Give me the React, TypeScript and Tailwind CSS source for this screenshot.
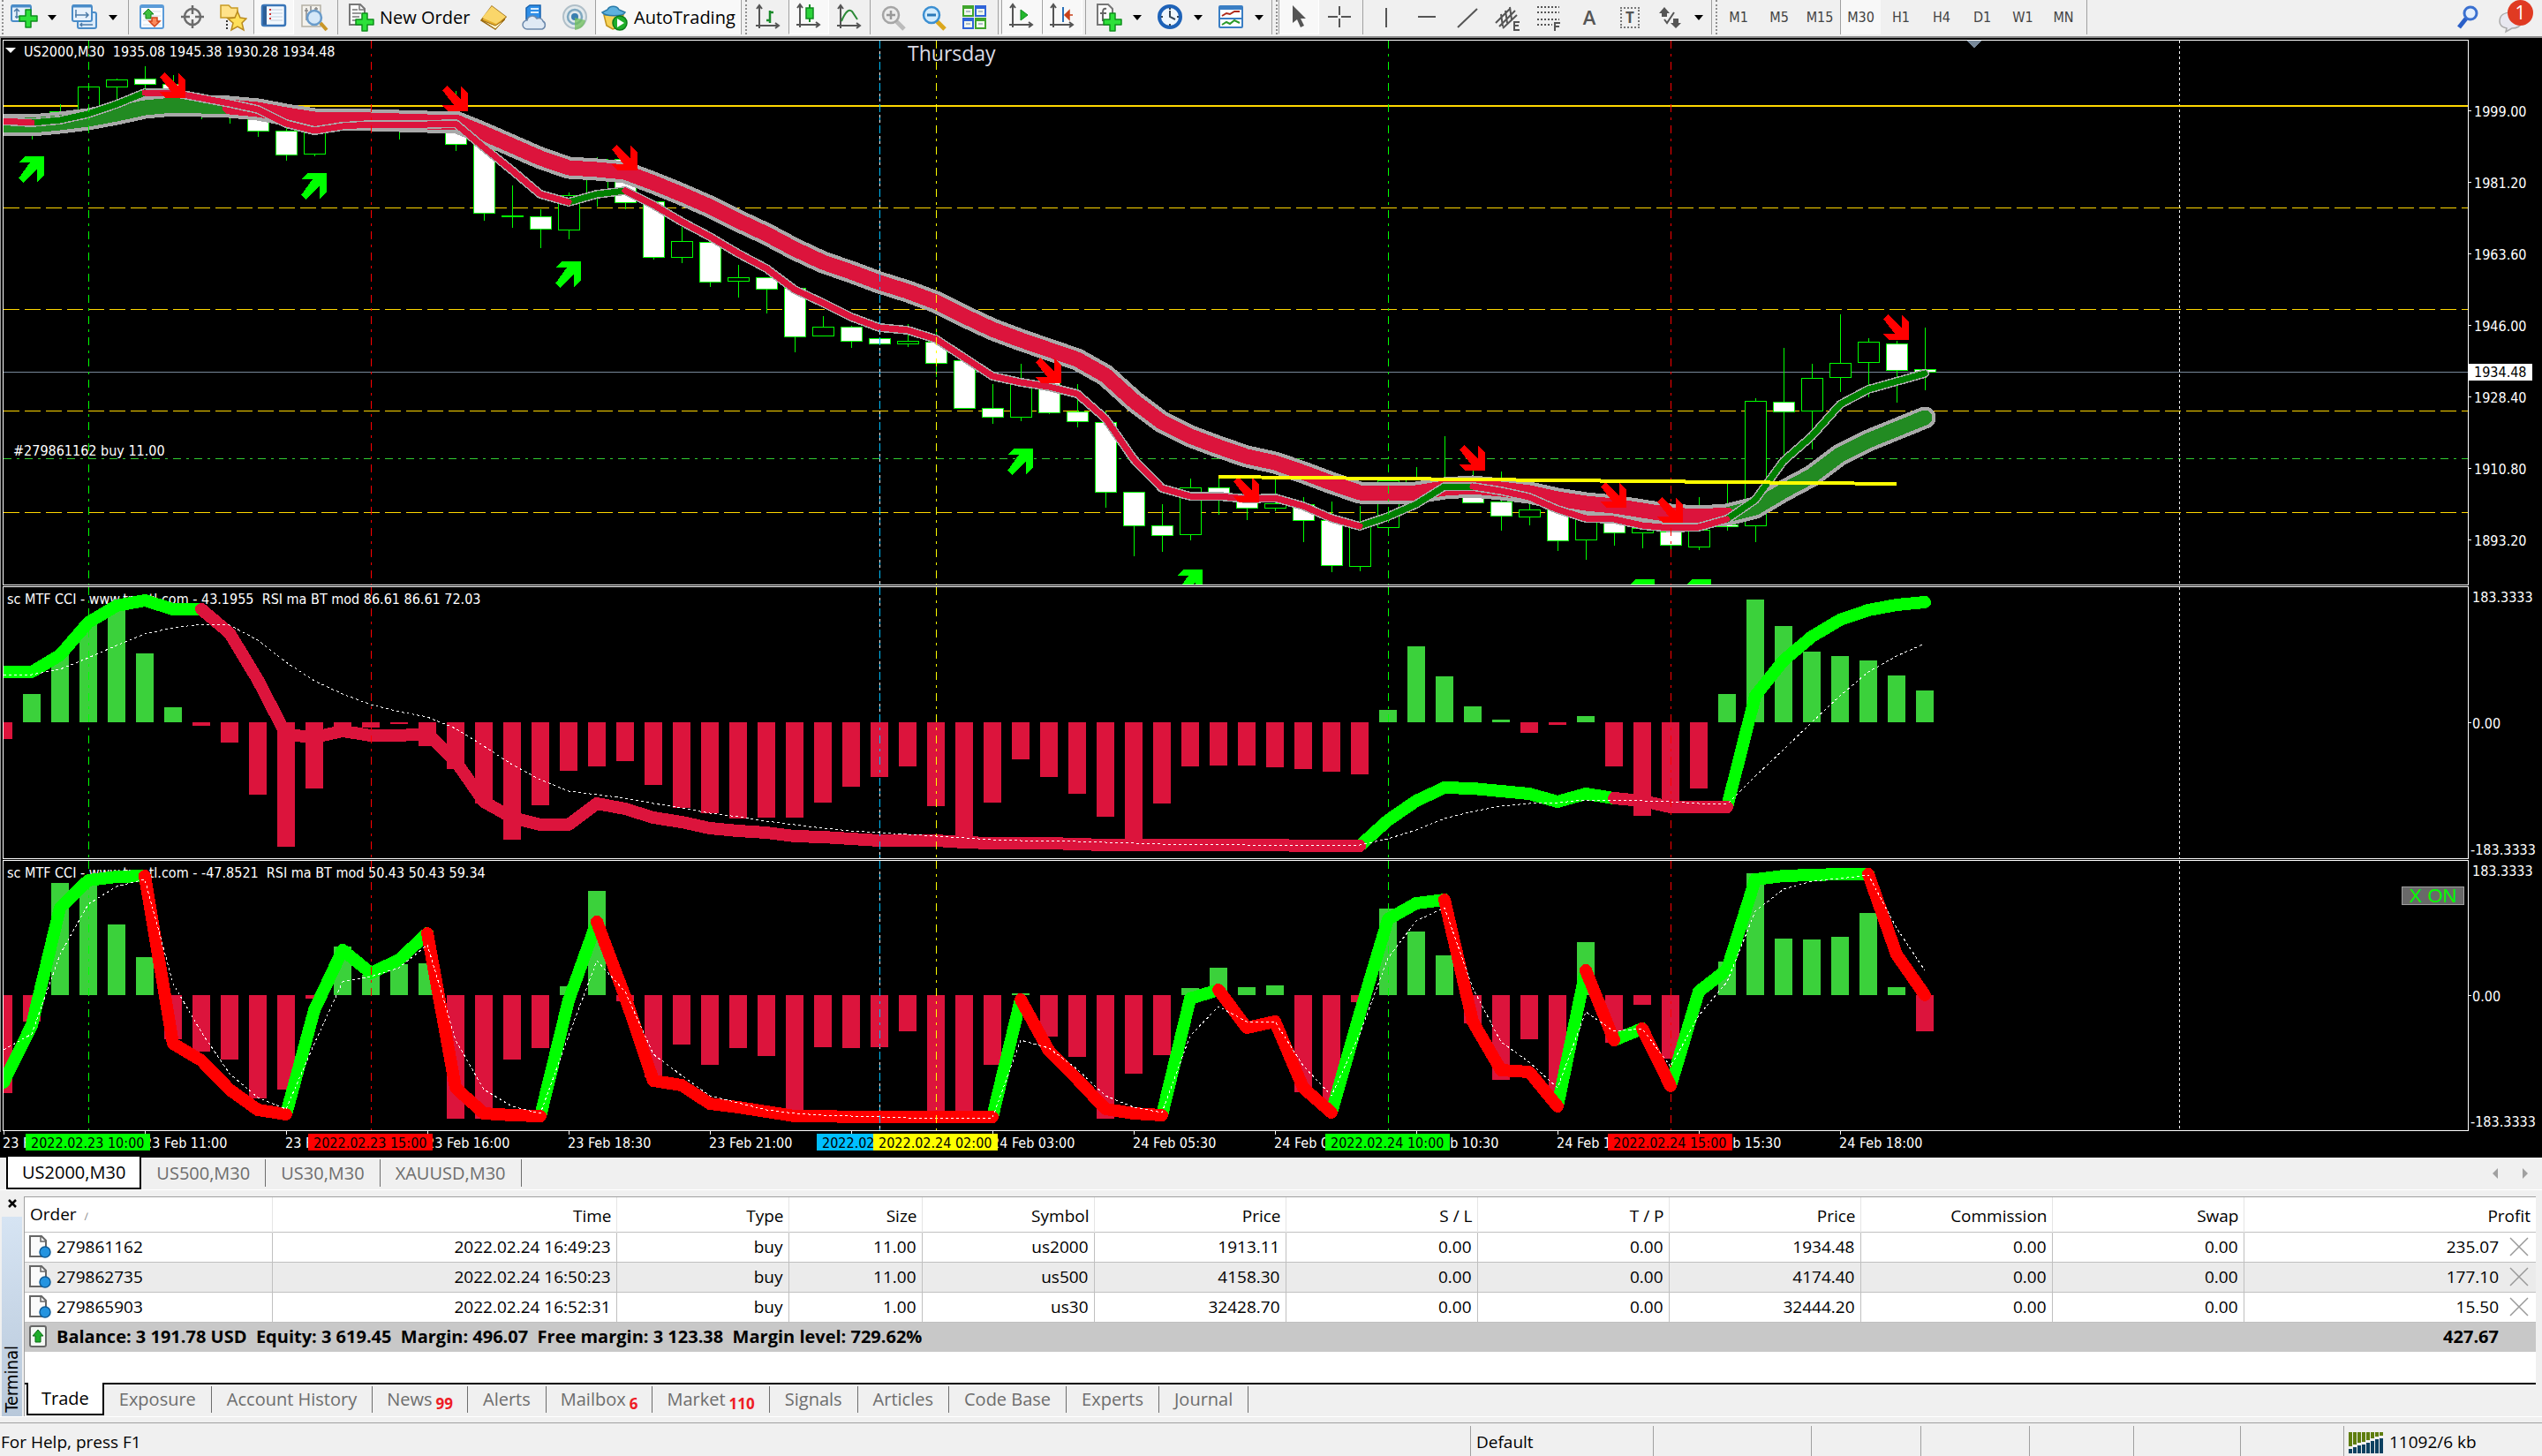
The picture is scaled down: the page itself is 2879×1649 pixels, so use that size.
import React from 'react';

type Segment = [from: number, to: number, color: string];
type Candle = [index: number, high: number, top: number, bottom: number, low: number, bearish: 0 | 1];

const CHART_FONT = "font-['DejaVu_Sans_Condensed','Noto_Sans',sans-serif]";
const RIGHT = 2795;

const LIME = '#00ff00';
const CRIMSON = '#dc143c';
const RED = '#ff0000';
const GREEN = '#008000';
const FOREST = '#228b22';

// bars are 32 units apart
const barX = (index: number) => 4 + index * 32;

const candles: Candle[] = [
  [1, 136, 138, 144, 158, 0], [2, 118, 126, 140, 142, 0], [3, 98, 98, 132, 134, 0], [4, 89, 90, 98, 112, 0],
  [5, 75, 89, 95, 102, 1], [6, 85, 95, 108, 112, 1], [7, 108, 110, 124, 135, 1], [8, 112, 116, 126, 140, 1],
  [9, 120, 124, 148, 155, 1], [10, 145, 148, 175, 182, 1], [11, 148, 150, 174, 177, 0], [14, 140, 141, 145, 158, 1],
  [16, 103, 135, 163, 171, 1], [17, 160, 162, 241, 250, 1], [18, 210, 244, 245, 258, 0], [19, 237, 245, 259, 281, 1],
  [20, 218, 221, 260, 271, 0], [21, 178, 180, 220, 234, 0], [22, 180, 180, 229, 237, 1], [23, 228, 228, 291, 294, 1],
  [24, 255, 273, 291, 298, 0], [25, 274, 274, 319, 325, 1], [26, 300, 314, 318, 337, 0], [27, 314, 314, 327, 355, 1],
  [28, 326, 326, 381, 399, 1], [29, 358, 370, 380, 380, 0], [30, 369, 370, 386, 394, 1], [31, 383, 383, 389, 389, 1],
  [32, 367, 386, 389, 393, 0], [33, 372, 387, 411, 427, 1], [34, 408, 408, 462, 463, 1], [35, 435, 462, 472, 480, 1],
  [36, 412, 435, 472, 477, 0], [37, 433, 433, 467, 469, 1], [38, 435, 466, 477, 484, 1], [39, 466, 478, 557, 575, 1],
  [40, 557, 557, 595, 630, 1], [41, 571, 595, 606, 625, 1], [42, 542, 552, 605, 612, 0], [43, 540, 552, 562, 583, 1],
  [44, 560, 560, 575, 589, 1], [45, 542, 570, 575, 579, 0], [46, 563, 571, 589, 614, 1], [47, 568, 589, 640, 648, 1],
  [48, 573, 593, 641, 647, 0], [49, 544, 544, 597, 598, 0], [50, 529, 540, 548, 560, 0], [51, 494, 542, 548, 550, 0],
  [52, 533, 548, 569, 570, 1], [53, 534, 568, 584, 601, 1], [54, 570, 577, 585, 595, 0], [55, 577, 577, 612, 624, 1],
  [56, 587, 587, 611, 634, 0], [57, 592, 592, 603, 618, 1], [58, 598, 598, 603, 621, 0], [59, 602, 602, 617, 622, 1],
  [60, 563, 600, 619, 623, 0], [61, 548, 594, 596, 601, 1], [62, 451, 454, 595, 614, 0], [63, 394, 455, 466, 517, 1],
  [64, 412, 428, 465, 509, 0], [65, 356, 411, 427, 444, 0], [66, 383, 387, 410, 450, 0], [67, 386, 389, 419, 456, 1],
  [68, 371, 418, 421, 442, 1],
];

const slowBand = [
  141, 142, 139, 135, 129, 122, 119, 120, 121, 124, 130, 135, 135, 136, 137, 138, 138, 151, 165, 179, 190, 192, 195,
  207, 220, 234, 250, 265, 282, 297, 308, 320, 330, 342, 358, 373, 385, 396, 407, 425, 454, 478, 494, 506, 517, 524,
  535, 547, 558, 559, 558, 553, 551, 554, 558, 565, 570, 573, 578, 583, 585, 583, 575, 556, 539, 515, 499, 486, 473,
];
const slowSegments: Segment[] = [[0, 8, FOREST], [61, 68, FOREST], [8, 61, CRIMSON]];

const fastBand = [
  137, 139, 136, 129, 118, 105, 105, 111, 117, 124, 140, 148, 143, 141, 141, 141, 140, 167, 193, 220, 229, 220, 216,
  232, 251, 268, 287, 304, 328, 343, 359, 371, 374, 384, 405, 426, 433, 438, 446, 474, 520, 553, 562, 562, 565, 564,
  573, 587, 596, 585, 571, 551, 551, 556, 563, 577, 587, 588, 595, 598, 597, 588, 566, 522, 494, 458, 441, 432, 423,
];
const fastSegments: Segment[] = [
  [1, 5, GREEN], [20, 22, GREEN], [48, 52, GREEN], [61, 68, GREEN],
  [0, 1, CRIMSON], [5, 20, CRIMSON], [22, 48, CRIMSON], [52, 61, CRIMSON],
];

const sellArrows = [[6, 82], [16, 97], [22, 164], [37, 405], [44, 540], [52, 504], [57, 546], [59, 563], [67, 356]];
const buyArrows = [[1, 177], [11, 196], [20, 296], [36, 508], [42, 645], [58, 656], [60, 656]];

const cciSlow = [
  -19, 32, 79, 112, 130, 78, 17, -4, -23, -82, -141, -75, -10, -6, -2, -27, -53, -92, -133, -94, -55, -50, -44, -71,
  -97, -103, -109, -108, -108, -91, -73, -62, -50, -95, -133, -91, -42, -62, -81, -107, -133, -92, -50, -49, -49, -51,
  -53, -56, -59, 14, 86, 52, 18, 3, -12, -3, 7, -50, -106, -97, -75, 32, 139, 109, 80, 75, 70, 53, 36,
];
const rsiSlow = [
  761, 761, 742, 705, 686, 680, 690, 690, 717, 770, 832, 835, 828, 833, 833, 831, 862, 908, 926, 934, 934, 910, 916,
  926, 931, 938, 941, 943, 947, 948, 950, 952, 952, 952, 954, 955, 955, 955, 956, 957, 957, 957, 957, 957, 957, 957,
  958, 958, 958, 929, 907, 892, 893, 896, 899, 908, 899, 904, 907, 914, 914, 914, 788, 748, 721, 702, 691, 685, 682,
];
const rsiSlowSegments: Segment[] = [[0, 7, LIME], [48, 57, LIME], [61, 68, LIME], [7, 48, CRIMSON], [57, 61, CRIMSON]];
const signalSlow = [
  765, 764, 758, 745, 731, 718, 711, 707, 708, 725, 750, 771, 786, 798, 806, 812, 825, 845, 866, 883, 896, 900, 904,
  910, 915, 921, 925, 930, 934, 938, 941, 943, 945, 947, 949, 951, 952, 952, 953, 954, 955, 956, 956, 956, 957, 957,
  957, 957, 957, 950, 940, 927, 919, 913, 910, 909, 906, 906, 907, 908, 910, 911, 879, 849, 818, 788, 761, 743, 729,
];

const cciFast = [
  -111, -30, 127, 125, 80, 43, -50, -64, -73, -117, -107, -4, 55, 23, 35, 36, -140, -140, -73, -60, 10, 118, -7, -93,
  -56, -79, -60, -69, -133, -59, -60, -59, -41, -135, -131, -79, 2, -47, -70, -140, -89, -68, 8, 31, 9, 11, -110,
  -120, -8, 98, 72, 45, -32, -96, -50, -112, 60, -54, -11, -72, 0, 38, 138, 64, 63, 66, 93, 9, -41,
];
const rsiFast = [
  1226, 1161, 1028, 997, 993, 992, 1182, 1201, 1234, 1257, 1262, 1144, 1076, 1102, 1087, 1057, 1232, 1261, 1263, 1264,
  1133, 1044, 1129, 1224, 1229, 1250, 1254, 1259, 1264, 1264, 1265, 1265, 1265, 1265, 1265, 1265, 1132, 1190, 1222,
  1256, 1261, 1263, 1131, 1121, 1164, 1157, 1232, 1260, 1148, 1041, 1023, 1019, 1157, 1212, 1214, 1253, 1099, 1178,
  1165, 1230, 1123, 1098, 996, 992, 991, 990, 990, 1081, 1127,
];
const rsiFastSegments: Segment[] = [
  [0, 5, LIME], [10, 15, LIME], [19, 21, LIME], [35, 36, LIME], [41, 43, LIME], [47, 51, LIME], [55, 56, LIME],
  [57, 58, LIME], [59, 66, LIME],
  [5, 10, RED], [15, 19, RED], [21, 35, RED], [36, 41, RED], [43, 47, RED], [51, 55, RED], [56, 57, RED],
  [58, 59, RED], [66, 68, RED],
];
const signalFast = [
  1189, 1171, 1081, 1024, 1004, 996, 1114, 1169, 1216, 1243, 1256, 1182, 1112, 1106, 1096, 1070, 1178, 1234, 1253,
  1261, 1173, 1088, 1123, 1194, 1218, 1241, 1249, 1257, 1261, 1263, 1264, 1265, 1266, 1266, 1266, 1266, 1178, 1187,
  1211, 1241, 1254, 1260, 1173, 1140, 1157, 1157, 1207, 1241, 1171, 1085, 1043, 1028, 1119, 1180, 1203, 1232, 1146,
  1168, 1165, 1208, 1150, 1112, 1032, 1007, 998, 995, 991, 1051, 1099,
];

const markers = [
  { index: 3, color: LIME, label: '2022.02.23 10:00' },
  { index: 13, color: RED, label: '2022.02.23 15:00' },
  { index: 31, color: '#00bfff', label: '2022.02.24 01:00' },
  { index: 33, color: '#ffff00', label: '2022.02.24 02:00' },
  { index: 49, color: LIME, label: '2022.02.24 10:00' },
  { index: 59, color: RED, label: '2022.02.24 15:00' },
];

const timeLabels = [
  '23 Feb 2022', '23 Feb 11:00', '23 Feb 13:30', '23 Feb 16:00', '23 Feb 18:30', '23 Feb 21:00', '',
  '24 Feb 03:00', '24 Feb 05:30', '24 Feb 08:00', '24 Feb 10:30', '24 Feb 13:00', '24 Feb 15:30', '24 Feb 18:00',
];

const prices = ['1999.00', '1981.20', '1963.60', '1946.00', '1928.40', '1910.80', '1893.20'];

const toPoints = (values: number[], from = 0, to = values.length - 1) =>
  values.slice(from, to + 1).map((y, i) => `${barX(from + i)},${y}`).join(' ');

interface StrokeProps {
  values: number[];
  segments: Segment[];
  width: number;
}

const SegmentedLine: React.FC<StrokeProps> = ({ values, segments, width }) => (
  <g fill="none" strokeWidth={width} strokeLinecap="round" strokeLinejoin="round">
    {segments.map(([from, to, color]) => (
      <polyline key={from} points={toPoints(values, from, to)} stroke={color} />
    ))}
  </g>
);

const Outline: React.FC<{ values: number[]; width: number }> = ({ values, width }) => (
  <polyline
    points={toPoints(values)}
    fill="none"
    stroke="#a9a9a9"
    strokeWidth={width}
    strokeLinecap="round"
    strokeLinejoin="round"
  />
);

const VerticalLines: React.FC<{ top: number; bottom: number }> = ({ top, bottom }) => (
  <g strokeWidth="1">
    {markers.map(({ index, color }) => (
      <line
        key={index}
        x1={barX(index) + 0.5}
        x2={barX(index) + 0.5}
        y1={top}
        y2={bottom}
        stroke={color}
        strokeDasharray="9 6 3 6"
      />
    ))}
  </g>
);

const PeriodSeparators: React.FC<{ top: number; bottom: number }> = ({ top, bottom }) => (
  <g stroke="#ffffff" strokeWidth="1" strokeDasharray="3 3">
    <line x1={barX(31) + 0.5} x2={barX(31) + 0.5} y1={top} y2={bottom} />
    <line x1={barX(77) + 0.5} x2={barX(77) + 0.5} y1={top} y2={bottom} />
  </g>
);

const Frame: React.FC<{ top: number; bottom: number }> = ({ top, bottom }) => (
  <g shapeRendering="crispEdges">
    <rect x="0" y={top - 2} width="1" height={bottom - top + 4} fill="#a0a0a0" />
    <path d={`M3.5 ${bottom + 0.5}V${top + 0.5}H${RIGHT + 0.5}V${bottom + 0.5}Z`} fill="none" stroke="#fff" />
  </g>
);

const PricePanel: React.FC = () => (
  <svg viewBox="0 43 2879 620" className={`block w-full ${CHART_FONT}`} fontSize="16" fill="#fff">
    <defs>
      <clipPath id="price-area">
        <rect x="4" y="46" width="2791" height="616" />
      </clipPath>
    </defs>
    <path d="M6 54h12l-6 6z" />
    <text x="27" y="64" xmlSpace="preserve">US2000,M30  1935.08 1945.38 1930.28 1934.48</text>
    <text x="1028" y="69" fontSize="23" fill="#dcdce6" className="font-['Open_Sans',sans-serif]">Thursday</text>
    <text x="15" y="516">#279861162 buy 11.00</text>

    <g clipPath="url(#price-area)" shapeRendering="crispEdges">
      <PeriodSeparators top={46} bottom={662} />
      <rect x="4" y="119" width={RIGHT - 4} height="2" fill="#ffd700" />
      <g stroke="#ffd700" strokeDasharray="18 6">
        {[235, 350, 465, 580].map((y) => (
          <line key={y} x1="4" x2={RIGHT} y1={y + 0.5} y2={y + 0.5} />
        ))}
      </g>
      <line x1="4" x2={RIGHT} y1="421.5" y2="421.5" stroke="#778899" />
      <line x1="4" x2={RIGHT} y1="519.5" y2="519.5" stroke="#32cd32" strokeDasharray="9 6 3 6" />

      {candles.map(([index, high, top, bottom, low, bearish]) => (
        <g key={index} stroke={LIME}>
          <line x1={barX(index) + 0.5} x2={barX(index) + 0.5} y1={high} y2={low} />
          <rect
            x={barX(index) - 11.5}
            y={top + 0.5}
            width="24"
            height={bottom - top}
            fill={bearish ? '#ffffff' : '#000000'}
          />
        </g>
      ))}

      <Outline values={slowBand} width={25} />
      <SegmentedLine values={slowBand} segments={slowSegments} width={17} />
      <Outline values={fastBand} width={10} />
      <SegmentedLine values={fastBand} segments={fastSegments} width={7} />

      <VerticalLines top={46} bottom={662} />
      {sellArrows.map(([index, y]) => (
        <path
          key={index}
          transform={`translate(${barX(index) - 15} ${y})`}
          d="M5 0L21 16V0L29 9V29H6L0 22H13L0 5Z"
          fill={RED}
        />
      ))}
      {buyArrows.map(([index, y]) => (
        <path
          key={index}
          transform={`translate(${barX(index) - 15} ${y})`}
          d="M5 30L21 14V30L29 21V0H7L0 7H13L0 25Z"
          fill={LIME}
        />
      ))}
      <path d="M1380 540L2148 548" stroke="#ffff00" strokeWidth="4" />
      <path d="M2227 46h17l-8 9z" fill="#778899" />
    </g>

    <Frame top={45} bottom={662} />
    {prices.map((price, i) => (
      <g key={price}>
        <rect x={RIGHT} y={125 + i * 81} width="4" height="1" />
        <text x="2802" y={132 + i * 81}>{price}</text>
      </g>
    ))}
    <rect x={RIGHT + 1} y="412" width="72" height="19" />
    <text x="2802" y="427" fill="#000">1934.48</text>
  </svg>
);

interface IndicatorProps {
  title: string;
  top: number;
  bottom: number;
  zero: number;
  bars: number[];
  line: number[];
  segments: Segment[];
  signal: number[];
}

const IndicatorPlot: React.FC<IndicatorProps> = ({ title, top, bottom, zero, bars, line, segments, signal }) => (
  <>
    <text x="8" y={top + 20} xmlSpace="preserve">{title}</text>
    <g shapeRendering="crispEdges">
      <PeriodSeparators top={top + 1} bottom={bottom} />
      {bars.map((value, i) => {
        const left = Math.max(barX(i) - 10, 4);
        return (
          <rect
            key={i}
            x={left}
            y={value > 0 ? zero - value : zero}
            width={barX(i) + 10 - left}
            height={Math.abs(value)}
            fill={value > 0 ? '#3bd13b' : CRIMSON}
          />
        );
      })}
      <SegmentedLine values={line} segments={segments} width={14} />
      <polyline points={toPoints(signal)} fill="none" stroke="#ffffff" strokeDasharray="3 3" />
      <VerticalLines top={top + 1} bottom={bottom} />
      {/* hides line caps that run past the left edge */}
      <rect x="0" y={top} width="4" height={bottom - top} fill="#000" />
    </g>
    <Frame top={top} bottom={bottom} />
    <text x="2800" y={top + 18}>183.3333</text>
    <rect x={RIGHT} y={zero} width="4" height="1" />
    <text x="2800" y={zero + 7}>0.00</text>
    <text x="2798" y={bottom - 4}>-183.3333</text>
  </>
);

const TimeAxis: React.FC = () => (
  <g>
    {timeLabels.map((label, i) => (
      <g key={i}>
        <rect x={barX(i * 5)} y="1281" width="1" height="4" />
        <text x={barX(i * 5) - 1} y="1300">{label}</text>
      </g>
    ))}
    {markers.map(({ index, color, label }) => (
      <g key={index}>
        <rect x={barX(index) - 71} y="1284" width="141" height="19" fill={color} />
        <text x={barX(index) - 65} y="1300" fill="#000">{label}</text>
      </g>
    ))}
  </g>
);

const ChartWindow: React.FC = () => (
  <main className="bg-black">
    <PricePanel />
    <svg viewBox="0 663 2879 310" className={`block w-full ${CHART_FONT}`} fontSize="16" fill="#fff">
      <IndicatorPlot
        title="sc MTF CCI - www.truetl.com - 43.1955  RSI ma BT mod 86.61 86.61 72.03"
        top={664}
        bottom={972}
        zero={818}
        bars={cciSlow}
        line={rsiSlow}
        segments={rsiSlowSegments}
        signal={signalSlow}
      />
    </svg>
    <div className="relative">
      <svg viewBox="0 973 2879 336" className={`block w-full ${CHART_FONT}`} fontSize="16" fill="#fff">
        <IndicatorPlot
          title="sc MTF CCI - www.truetl.com - -47.8521  RSI ma BT mod 50.43 50.43 59.34"
          top={974}
          bottom={1280}
          zero={1127}
          bars={cciFast}
          line={rsiFast}
          segments={rsiFastSegments}
          signal={signalFast}
        />
        <TimeAxis />
      </svg>
      <button className="absolute top-[31px] right-[88px] flex h-[21px] w-[71px] items-center justify-center border border-[#a0a0a0] bg-[#696969] font-['Liberation_Sans',sans-serif] text-[22px] leading-none text-[#00ff00]">
        X ON
      </button>
    </div>
  </main>
);

/* ---------- toolbar ---------- */

interface IconProps {
  children: React.ReactNode;
}

const Icon: React.FC<IconProps> = ({ children }) => (
  <svg viewBox="0 0 32 32" className="h-8 w-8 shrink-0" fill="none">
    {children}
  </svg>
);

interface ToolProps {
  label: string;
  pressed?: boolean;
  children: React.ReactNode;
}

const Tool: React.FC<ToolProps> = ({ label, pressed, children }) => (
  <button
    aria-label={label}
    className={`flex h-[39px] w-[46px] shrink-0 items-center justify-center ${
      pressed ? 'border-r border-b border-l border-r-white border-b-white border-l-[#a0a0a0] bg-[#f8f8f8]' : ''
    }`}
  >
    {children}
  </button>
);

const DropArrow: React.FC<{ label: string }> = ({ label }) => (
  <button aria-label={label} className="flex h-[39px] w-[23px] shrink-0 items-center pl-1">
    <svg viewBox="0 0 10 6" className="h-[6px] w-[10px]">
      <path d="M0 0h10L5 6z" fill="#000" />
    </svg>
  </button>
);

const Separator: React.FC = () => (
  <div className="flex w-[7px] shrink-0 justify-center">
    <div className="h-[39px] w-px bg-[#a0a0a0]" />
  </div>
);

const Grip: React.FC = () => (
  <div className="h-[39px] w-2 shrink-0 border-l border-[#a0a0a0]">
    <div className="ml-1 h-full w-px border-l-2 border-dotted border-[#909090]" />
  </div>
);

const GreenPlus: React.FC<{ x: number; y: number }> = ({ x, y }) => (
  <path
    transform={`translate(${x} ${y})`}
    d="M7 0h6v7h7v6h-7v7H7v-7H0V7h7z"
    fill="#2ee03a"
    stroke="#0f8f1c"
    strokeWidth="1.5"
    strokeLinejoin="round"
  />
);

const Axes: React.FC = () => <path d="M6 3v25M2 25h25M3 6l3-4 3 4M24 22l4 3-4 3" stroke="#555" strokeWidth="2" />;

const timeframes = ['M1', 'M5', 'M15', 'M30', 'H1', 'H4', 'D1', 'W1', 'MN'];

const Toolbar: React.FC = () => (
  <header className="flex h-[43px] items-start overflow-hidden border-b-2 border-[#8c8c8c] bg-[#f0f0f0] text-[20px] text-black">
    <div className="h-[39px] w-1 shrink-0 border-r-2 border-dotted border-[#909090]" />
    <Tool label="New chart">
      <Icon>
        <rect x="2" y="2" width="22" height="18" rx="2" fill="#e4f0fb" stroke="#4a8cc8" strokeWidth="2" />
        <path d="M2 3h22" stroke="#4a8cc8" strokeWidth="3" />
        <path d="M8 7v10M5 9l3-3 3 3M6 15h7" stroke="#4d7ca8" strokeWidth="1.5" />
        <GreenPlus x={11} y={7} />
      </Icon>
    </Tool>
    <DropArrow label="New chart menu" />
    <Tool label="Profiles">
      <Icon>
        <rect x="8" y="10" width="21" height="18" rx="2" fill="#dcebfa" stroke="#4a8cc8" strokeWidth="2" />
        <rect x="2" y="2" width="22" height="18" rx="2" fill="#e8f2fc" stroke="#4a8cc8" strokeWidth="2" />
        <path d="M2 3h22" stroke="#4a8cc8" strokeWidth="3" />
        <path d="M6 7v9M5 13h15M17 10l3 3-3 3M11 24h14M13 22l-2 2 2 2" stroke="#4d7ca8" strokeWidth="1.5" />
      </Icon>
    </Tool>
    <DropArrow label="Profiles menu" />
    <Separator />
    <Tool label="Market Watch">
      <Icon>
        <rect x="3" y="2" width="26" height="26" rx="2" fill="#fbfdff" stroke="#5b9bd8" strokeWidth="2" />
        <path d="M3 4h26" stroke="#5b9bd8" strokeWidth="2" />
        <path d="M6 9h20M6 14h20M6 19h20M6 24h20" stroke="#d4dde6" />
        <path d="M12 6l6 6h-3v5H9v-5H6z" fill="#3fbf3f" stroke="#14801c" />
        <path d="M19 26l-6-6h3v-4h6v4h3z" fill="#fb8a5c" stroke="#d2441a" strokeWidth="1.5" />
      </Icon>
    </Tool>
    <Tool label="Data Window">
      <Icon>
        <circle cx="16" cy="15" r="9" stroke="#6b6b6b" strokeWidth="2.5" />
        <path d="M16 2v10M16 18v10M3 15h10M19 15h10" stroke="#6b6b6b" strokeWidth="2.5" />
      </Icon>
    </Tool>
    <Tool label="Navigator">
      <Icon>
        <path d="M2 2h9l3 3h7v11H2z" fill="#ffe28a" stroke="#c79a25" strokeWidth="1.5" />
        <path d="M9 19v11" stroke="#333" strokeDasharray="2 2" strokeWidth="2" />
        <path d="M21 9l3 7 7 1-5 5 2 8-7-4-7 4 2-8-6-5 8-1z" fill="#ffe05a" stroke="#b98a1e" strokeWidth="1.5" />
      </Icon>
    </Tool>
    <Tool label="Terminal" pressed>
      <Icon>
        <rect x="3" y="3" width="26" height="23" rx="2" fill="#f4f9fe" stroke="#3a76b8" strokeWidth="2.5" />
        <path d="M6 4v21" stroke="#2d5f98" strokeWidth="4" />
        <path d="M12 8h14M12 12h14M12 16h14M12 20h14" stroke="#d4dde8" strokeWidth="1.5" />
        <path d="M11 8h2M11 13h2M11 18h2" stroke="#d03030" strokeWidth="2" />
      </Icon>
    </Tool>
    <Tool label="Strategy Tester">
      <Icon>
        <rect x="2" y="2" width="21" height="24" fill="#f4f2ec" stroke="#b4b0a4" strokeWidth="1.5" />
        <path d="M7 5v14M12 3v8M18 4v6M5 8h4M16 6h4" stroke="#888" strokeWidth="1.5" />
        <circle cx="16" cy="16" r="8" fill="#cfe6fa" fillOpacity="0.85" stroke="#6a9ccb" strokeWidth="2.5" />
        <path d="M23 22l7 8" stroke="#c89628" strokeWidth="4" />
      </Icon>
    </Tool>
    <Separator />
    <button className="flex h-[39px] w-[150px] shrink-0 items-center gap-[5px] pl-[7px] whitespace-nowrap">
      <Icon>
        <path d="M3 1h12l5 5v18H3z" fill="#fafafa" stroke="#777" strokeWidth="2" />
        <path d="M14 1v6h6M6 7h6M6 11h10M6 15h8M6 19h5" stroke="#777" strokeWidth="1.5" />
        <GreenPlus x={10} y={11} />
      </Icon>
      New Order
    </button>
    <Tool label="MetaEditor">
      <Icon>
        <path d="M14 3L30 15L18 29L2 19Z" fill="#e5ad2b" stroke="#9a6a10" strokeWidth="1.5" />
        <path d="M14 3L30 15L19 23L3 16Z" fill="#fad66a" />
        <path d="M3 19l15 10 11-11-11 7z" fill="#fff3c8" stroke="#9a6a10" />
      </Icon>
    </Tool>
    <Tool label="Cloud">
      <Icon>
        <path d="M7 5l4-3h12v16H7z" fill="#2f8fe8" stroke="#1763b0" strokeWidth="1.5" />
        <path d="M12 6h9M12 10h9" stroke="#d8ecff" strokeWidth="2" />
        <path d="M8 29a5 5 0 010-10 6 6 0 0111-2 5 5 0 017 3 5 5 0 01-1 9z" fill="#dfe9f4" stroke="#6b88ab" strokeWidth="1.5" />
      </Icon>
    </Tool>
    <Tool label="Signals">
      <Icon>
        <circle cx="16" cy="15" r="13" fill="#e2e9ec" stroke="#b0bfc8" strokeWidth="2" />
        <circle cx="16" cy="15" r="8" stroke="#7fa8c0" strokeWidth="2.5" />
        <circle cx="16" cy="15" r="4" fill="#3a7fb0" />
        <path d="M16 16v14c7-1 11-5 12-11z" fill="#6fbf5a" fillOpacity="0.75" />
      </Icon>
    </Tool>
    <button className="flex h-[39px] w-[165px] shrink-0 items-center gap-[6px] border-r border-l border-r-white border-l-[#a0a0a0] bg-[#f8f8f8] pl-[5px] whitespace-nowrap">
      <Icon>
        <path d="M4 13h22l-4 14-8 2-7-4z" fill="#f7d358" stroke="#c0931c" strokeWidth="1.5" />
        <path d="M8 7a7 6 0 0113 0l7 3c-2 5-23 5-26 0z" fill="#5db1dd" stroke="#2a7aa8" strokeWidth="1.5" />
        <circle cx="22" cy="22" r="8" fill="#1fae2a" stroke="#0b7a18" strokeWidth="1.5" />
        <path d="M19 17l8 5-8 5z" fill="#fff" />
      </Icon>
      AutoTrading
    </button>
    <Grip />
    <Tool label="Bar chart">
      <Icon>
        <Axes />
        <path d="M18 8v14M14 19h4M18 10h4" stroke="#1a8a2a" strokeWidth="2.5" />
      </Icon>
    </Tool>
    <Tool label="Candlesticks" pressed>
      <Icon>
        <Axes />
        <path d="M17 2v20" stroke="#0f8a20" strokeWidth="2" />
        <rect x="13" y="6" width="8" height="12" fill="#2bd33a" stroke="#0f8a20" strokeWidth="1.5" />
      </Icon>
    </Tool>
    <Tool label="Line chart">
      <Icon>
        <Axes />
        <path d="M7 20c5-12 9-14 12-11l6 9" stroke="#2d8a38" strokeWidth="2" />
      </Icon>
    </Tool>
    <div className="h-[39px] w-1 shrink-0 border-l border-[#a0a0a0]" />
    <Tool label="Zoom in">
      <Icon>
        <path d="M19 20l9 9" stroke="#bbb" strokeWidth="5" />
        <circle cx="13" cy="13" r="9" fill="#ececec" stroke="#a5a5a5" strokeWidth="2.5" />
        <path d="M8 13h10M13 8v10" stroke="#999" strokeWidth="2.5" />
      </Icon>
    </Tool>
    <Tool label="Zoom out">
      <Icon>
        <path d="M19 20l9 9" stroke="#dba71d" strokeWidth="5" />
        <circle cx="13" cy="13" r="9" fill="#d4ecfc" stroke="#3b8fd2" strokeWidth="2.5" />
        <path d="M8 13h10" stroke="#2a78b8" strokeWidth="3" />
      </Icon>
    </Tool>
    <Tool label="Tile windows">
      <Icon>
        <rect x="2" y="2" width="13" height="13" fill="#3fa52c" />
        <rect x="16" y="2" width="13" height="13" fill="#2f64d8" />
        <rect x="2" y="16" width="13" height="13" fill="#2f64d8" />
        <rect x="16" y="16" width="13" height="13" fill="#3fa52c" />
        <path d="M4 6h9v7H4zM18 6h9v7h-9zM4 20h9v7H4zM18 20h9v7h-9z" fill="#f2f8ee" />
        <path d="M6 9h5M20 9h5M6 23h5M20 23h5" stroke="#9ab" strokeWidth="1.5" />
      </Icon>
    </Tool>
    <Separator />
    <Tool label="Auto scroll" pressed>
      <Icon>
        <Axes />
        <path d="M15 8l8 6-8 6z" fill="#22b82c" stroke="#0f8a20" />
      </Icon>
    </Tool>
    <Tool label="Chart shift" pressed>
      <Icon>
        <Axes />
        <path d="M17 5v17" stroke="#2a70b8" strokeWidth="2" />
        <path d="M28 14h-8M24 9l-5 5 5 5z" stroke="#c8401a" fill="#c8401a" strokeWidth="1.5" />
      </Icon>
    </Tool>
    <Separator />
    <Tool label="Indicators">
      <Icon>
        <path d="M3 1h12l5 5v18H3z" fill="#fafafa" stroke="#777" strokeWidth="2" />
        <path d="M13 6c-4-1-4 2-4 6v8M6 11h7" stroke="#666" strokeWidth="2" />
        <GreenPlus x={10} y={11} />
      </Icon>
    </Tool>
    <DropArrow label="Indicators menu" />
    <Tool label="Periods">
      <Icon>
        <circle cx="16" cy="15" r="12" fill="#eef6fd" stroke="#1d62b8" strokeWidth="4" />
        <path d="M16 8v7l6 3" stroke="#345" strokeWidth="2" />
        <path d="M16 5v2M16 23v2M6 15h2M24 15h2" stroke="#345" strokeWidth="2" />
      </Icon>
    </Tool>
    <DropArrow label="Periods menu" />
    <Tool label="Templates">
      <Icon>
        <rect x="3" y="3" width="26" height="24" rx="1" fill="#fff" stroke="#3a7ec4" strokeWidth="2" />
        <path d="M3 5h26" stroke="#3a7ec4" strokeWidth="4" />
        <path d="M3 17h26" stroke="#3a7ec4" strokeWidth="2" />
        <path d="M6 14l5-3 4 1 5-3h6" stroke="#b02a1a" strokeWidth="2" />
        <path d="M6 24l5-3 4 2 5-4 6 3" stroke="#2a9a2a" strokeWidth="2" />
      </Icon>
    </Tool>
    <DropArrow label="Templates menu" />
    <Grip />
    <Tool label="Cursor" pressed>
      <Icon>
        <path d="M9 3v20l5-4 4 9 4-2-4-8h6z" fill="#555" />
      </Icon>
    </Tool>
    <Tool label="Crosshair">
      <Icon>
        <path d="M16 3v10M16 17v10M3 15h11M18 15h11" stroke="#555" strokeWidth="2" />
      </Icon>
    </Tool>
    <Separator />
    <Tool label="Vertical line">
      <Icon><path d="M16 5v22" stroke="#555" strokeWidth="2" /></Icon>
    </Tool>
    <Tool label="Horizontal line">
      <Icon><path d="M6 15h20" stroke="#555" strokeWidth="2" /></Icon>
    </Tool>
    <Tool label="Trendline">
      <Icon><path d="M5 27L27 6" stroke="#555" strokeWidth="2" /></Icon>
    </Tool>
    <Tool label="Equidistant channel">
      <Icon>
        <path d="M2 22L18 6M6 26L24 8M10 28L26 13M8 12l2 14M13 8l2 14M18 4l2 14" stroke="#555" strokeWidth="2" />
        <path d="M29 21h-6v9h6M23 25h5" stroke="#555" strokeWidth="2" />
      </Icon>
    </Tool>
    <Tool label="Fibonacci retracement">
      <Icon>
        <path d="M3 4h25M3 10h25M3 18h25M3 24h17" stroke="#555" strokeWidth="2" strokeDasharray="2 2" />
        <path d="M29 22h-6v9M23 26h5" stroke="#555" strokeWidth="2" />
      </Icon>
    </Tool>
    <Tool label="Text">
      <span className="font-['Open_Sans',sans-serif] text-[22px] font-semibold text-[#555]">A</span>
    </Tool>
    <Tool label="Text label">
      <span className="flex h-6 w-[22px] items-center justify-center border-2 border-dotted border-[#777] font-['Open_Sans',sans-serif] text-[17px] font-bold text-[#555]">
        T
      </span>
    </Tool>
    <Tool label="Arrows">
      <Icon>
        <path d="M9 4l6 7h-3v4H6v-4H3zM22 28l-6-6h3v-5h6v5h3z" fill="#555" />
        <path d="M9 18l3 4 8-12" stroke="#555" strokeWidth="2" />
      </Icon>
    </Tool>
    <DropArrow label="Arrows menu" />
    <Grip />
    {timeframes.map((name) => (
      <button
        key={name}
        className={`h-[39px] w-[46px] shrink-0 text-[16px] text-[#444] ${CHART_FONT} ${
          name === 'M30' ? 'border-l border-[#a0a0a0] bg-[#f8f8f8]' : ''
        }`}
      >
        {name}
      </button>
    ))}
    <Separator />
    <div className="ml-auto flex shrink-0 items-center gap-[18px] pr-[10px]">
      <button aria-label="Search" className="h-[39px]">
        <svg viewBox="0 0 32 32" className="h-8 w-8" fill="none">
          <path d="M14 17L6 27" stroke="#2a5fc8" strokeWidth="5" />
          <circle cx="19" cy="11" r="7" fill="#e4effc" stroke="#3a70d0" strokeWidth="3" />
        </svg>
      </button>
      <button aria-label="Notifications" className="relative h-[39px] w-[40px]">
        <svg viewBox="0 0 40 39" className="h-[39px] w-[40px]">
          <path d="M2 24c0-7 6-10 13-10s12 4 12 10-6 8-11 8l-7 4 1-4c-5-1-8-4-8-8z" fill="#e8e8f0" stroke="#aaa" strokeWidth="1.5" />
        </svg>
        <span className="absolute top-0 right-0 flex h-[29px] w-[29px] items-center justify-center rounded-full bg-[#e03a22] text-[21px] text-white">
          1
        </span>
      </button>
    </div>
  </header>
);

/* ---------- chart tabs ---------- */

const charts = ['US2000,M30', 'US500,M30', 'US30,M30', 'XAUUSD,M30'];

const ChartTabs: React.FC = () => (
  <nav className="flex h-[39px] items-start border-t-2 border-b border-t-black border-b-white bg-[#f0f0f0] pl-[7px] text-[20px]">
    {charts.map((name, i) =>
      i === 0 ? (
        <button key={name} className="-mt-px h-[37px] border-r-2 border-b-2 border-l-2 border-black bg-white px-4 pt-px text-black">
          {name}
        </button>
      ) : (
        <button key={name} className="mt-[2px] h-[31px] border-r border-[#6d6d6d] px-[17px] pt-px leading-[30px] text-[#6d6d6d]">
          {name}
        </button>
      )
    )}
    <div className="ml-auto flex h-full items-center gap-7 pr-4">
      <button aria-label="Scroll left">
        <svg viewBox="0 0 6 12" className="h-3 w-[6px]"><path d="M6 0v12L0 6z" fill="#a0a0a0" /></svg>
      </button>
      <button aria-label="Scroll right">
        <svg viewBox="0 0 6 12" className="h-3 w-[6px]"><path d="M0 0v12l6-6z" fill="#a0a0a0" /></svg>
      </button>
    </div>
  </nav>
);

/* ---------- terminal ---------- */

const columns = ['Time', 'Type', 'Size', 'Symbol', 'Price', 'S / L', 'T / P', 'Price', 'Commission', 'Swap'];

const orders = [
  { id: '279861162', profit: '235.07', cells: ['2022.02.24 16:49:23', 'buy', '11.00', 'us2000', '1913.11', '0.00', '0.00', '1934.48', '0.00', '0.00'] },
  { id: '279862735', profit: '177.10', cells: ['2022.02.24 16:50:23', 'buy', '11.00', 'us500', '4158.30', '0.00', '0.00', '4174.40', '0.00', '0.00'] },
  { id: '279865903', profit: '15.50', cells: ['2022.02.24 16:52:31', 'buy', '1.00', 'us30', '32428.70', '0.00', '0.00', '32444.20', '0.00', '0.00'] },
];

const OrderIcon: React.FC = () => (
  <svg viewBox="0 0 26 28" className="h-7 w-[26px]">
    <path d="M2 2h13l5 5v18H2z" fill="#fafafa" stroke="#666" strokeWidth="2" />
    <path d="M14 2v6h6" fill="none" stroke="#666" strokeWidth="1.5" />
    <circle cx="19" cy="20" r="6" fill="#2494e0" stroke="#0f5c98" strokeWidth="1.5" />
  </svg>
);

const OrdersTable: React.FC = () => (
  <table className="w-full table-fixed border-collapse text-right text-[19px] leading-[24px] text-black">
    <colgroup>
      <col className="w-[280px]" />
      <col className="w-[390px]" />
      <col className="w-[195px]" />
      <col className="w-[151px]" />
      <col className="w-[195px]" />
      <col className="w-[217px]" />
      <col className="w-[217px]" />
      <col className="w-[217px]" />
      <col className="w-[217px]" />
      <col className="w-[217px]" />
      <col className="w-[217px]" />
      <col />
    </colgroup>
    <thead>
      <tr className="h-[39px] border-b border-[#c0c0c0]">
        <th className="border-r border-[#e5e5e5] pt-[3px] pl-[6px] text-left font-normal">
          Order <span className="pl-1 text-[12px] text-[#888]">∕</span>
        </th>
        {columns.map((name, i) => (
          <th key={i} className="border-r border-[#e5e5e5] pt-[3px] pr-[5px] font-normal">{name}</th>
        ))}
        <th className="pt-[3px] pr-[6px] font-normal">Profit</th>
      </tr>
    </thead>
    <tbody>
      {orders.map((order, row) => (
        <tr key={order.id} className={`h-[34px] border-b border-[#c0c0c0] ${row === 1 ? 'bg-[#ebebeb]' : 'bg-white'}`}>
          <td className="border-r border-[#c0c0c0] p-0">
            <div className="flex items-center gap-[6px] pl-1">
              <OrderIcon />
              {order.id}
            </div>
          </td>
          {order.cells.map((cell, i) => (
            <td key={i} className="border-r border-[#c0c0c0] py-0 pr-[6px]">{cell}</td>
          ))}
          <td className="p-0">
            <div className="flex items-center justify-end gap-3 pr-2">
              {order.profit}
              <button aria-label={`Close order ${order.id}`}>
                <svg viewBox="0 0 22 22" className="h-[22px] w-[22px]">
                  <path d="M1 1l20 20M21 1L1 21" stroke="#999" strokeWidth="1.5" />
                </svg>
              </button>
            </div>
          </td>
        </tr>
      ))}
      <tr className="h-[34px] bg-[#c8c8c8] text-[20px] font-bold">
        <td colSpan={11} className="p-0">
          <div className="flex items-center gap-[6px] pl-1 whitespace-pre">
            <svg viewBox="0 0 26 28" className="h-7 w-[26px]">
              <rect x="2" y="2" width="18" height="23" rx="2" fill="#f4f8f4" stroke="#666" strokeWidth="2" />
              <path d="M11 6l6 7h-3v7H8v-7H5z" fill="#1fae2a" stroke="#0b6a14" />
            </svg>
            {'Balance: 3 191.78 USD  Equity: 3 619.45  Margin: 496.07  Free margin: 3 123.38  Margin level: 729.62%'}
          </div>
        </td>
        <td className="py-0 pr-[42px]">427.67</td>
      </tr>
    </tbody>
  </table>
);

const terminalTabs: { name: string; count?: string }[] = [
  { name: 'Exposure' },
  { name: 'Account History' },
  { name: 'News', count: '99' },
  { name: 'Alerts' },
  { name: 'Mailbox', count: '6' },
  { name: 'Market', count: '110' },
  { name: 'Signals' },
  { name: 'Articles' },
  { name: 'Code Base' },
  { name: 'Experts' },
  { name: 'Journal' },
];

const Terminal: React.FC = () => (
  <section className="flex border-b border-white pt-[7px] pr-[7px]">
    <div className="flex w-[27px] shrink-0 flex-col items-center">
      <button aria-label="Close terminal" className="flex h-[23px] items-start pt-[3px]">
        <svg viewBox="0 0 10 10" className="h-[10px] w-[10px]">
          <path d="M1 1l8 8M9 1L1 9" stroke="#000" strokeWidth="2.5" />
        </svg>
      </button>
      <div className="flex w-[23px] flex-1 items-center justify-start bg-linear-to-b from-[#d6e4f3] to-[#b8c8da] pb-1 [writing-mode:sideways-lr]">
        <span className={`text-[20px] leading-[23px] ${CHART_FONT}`}>Terminal</span>
      </div>
    </div>
    <div className="min-w-0 flex-1 border-t border-l border-[#a0a0a0] bg-white">
      <OrdersTable />
      <div className="mt-[35px] flex h-[38px] items-start border-t-2 border-black bg-[#f0f0f0] pl-[2px] text-[20px]">
        <button className="-mt-[2px] h-[37px] border-r-2 border-b-2 border-l-2 border-black bg-white px-[15px] pt-px text-black">
          Trade
        </button>
        {terminalTabs.map(({ name, count }) => (
          <button
            key={name}
            className={`mt-[2px] flex h-[30px] items-center gap-1 border-r border-[#6d6d6d] whitespace-nowrap text-[#6d6d6d] ${
              count ? 'px-4' : 'px-[17px]'
            }`}
          >
            {name}
            {count && <span className="pt-2 text-[17px] leading-none font-bold text-[#ee1c25]">{count}</span>}
          </button>
        ))}
      </div>
    </div>
  </section>
);

const StatusBar: React.FC = () => (
  <footer className="mt-[6px] flex h-[39px] items-stretch border-t border-[#a0a0a0] pt-[3px] text-[19px] text-black">
    <div className="flex flex-1 items-center pt-[2px] pl-px">For Help, press F1</div>
    <div className="flex w-[207px] items-center border-l border-[#a0a0a0] pt-[2px] pl-[6px]">Default</div>
    <div className="w-[179px] border-l border-[#a0a0a0]" />
    <div className="w-[124px] border-l border-[#a0a0a0]" />
    <div className="w-[123px] border-l border-[#a0a0a0]" />
    <div className="w-[118px] border-l border-[#a0a0a0]" />
    <div className="w-[121px] border-l border-[#a0a0a0]" />
    <div className="w-[117px] border-l border-[#a0a0a0]" />
    <div className="flex w-[225px] items-center gap-[6px] border-l border-[#a0a0a0] pt-[2px] pl-[5px]">
      <svg viewBox="0 0 40 24" className="h-6 w-10">
        {[16, 14, 12, 11, 9, 7, 5, 4].map((h, i) => (
          <g key={i}>
            <rect x={i * 5} y="0" width="4" height={h} fill="#5e7d0e" />
            <rect x={i * 5} y={h + 3} width="4" height={21 - h} fill="#0d4160" />
          </g>
        ))}
      </svg>
      11092/6 kb
    </div>
  </footer>
);

export default function App() {
  return (
    <div className="min-h-screen bg-[#f0f0f0] font-['Open_Sans','Noto_Sans',sans-serif]">
      <Toolbar />
      <ChartWindow />
      <ChartTabs />
      <Terminal />
      <StatusBar />
    </div>
  );
}
